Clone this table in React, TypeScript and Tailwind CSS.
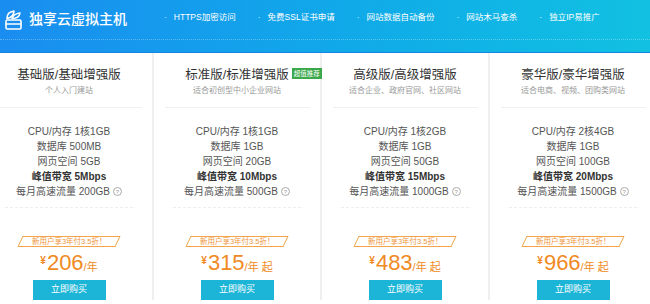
import { Fragment } from "react"

const features = ["HTTPS加密访问", "免费SSL证书申请", "网站数据自动备份", "网站木马查杀", "独立IP易推广"]

const plans = [
    { title: "基础版/基础增强版", sub: "个人入门建站", cpu: "1核1GB", db: "500MB", web: "5GB", bw: "5Mbps", traffic: "200GB", price: "206", from: false, hot: false },
    { title: "标准版/标准增强版", sub: "适合初创型中小企业网站", cpu: "1核1GB", db: "1GB", web: "20GB", bw: "10Mbps", traffic: "500GB", price: "315", from: true, hot: true },
    { title: "高级版/高级增强版", sub: "适合企业、政府官网、社区网站", cpu: "1核2GB", db: "1GB", web: "50GB", bw: "15Mbps", traffic: "1000GB", price: "483", from: true, hot: false },
    { title: "豪华版/豪华增强版", sub: "适合电商、视频、团购类网站", cpu: "2核4GB", db: "1GB", web: "100GB", bw: "20Mbps", traffic: "1500GB", price: "966", from: true, hot: false },
]

const LogoIcon = () => (
    <svg width="19" height="21" viewBox="0 0 19 21" fill="none" stroke="white" strokeWidth="1.6" strokeLinejoin="round" strokeLinecap="round">
        <path d="M3 9.5C3 5 6 2.5 10 2c0 3.5-2.5 6.5-7 7.5z" />
        <path d="M8 9.5c1-3 4-5 8-5.5-.5 3.5-3.5 5.5-8 5.5z" />
        <rect x="2" y="11" width="15" height="9" rx="1.2" />
        <path d="M2 15h15" />
    </svg>
)

const HelpIcon = () => (
    <span className="ml-[3px] inline-flex size-[9px] items-center justify-center rounded-full border border-[#aaa] text-[6px] leading-none text-[#999]">?</span>
)

const PlanCard = ({ plan }: { plan: typeof plans[number] }) => {
    return (
        <div className="flex w-[168px] shrink-0 flex-col items-center border-r-2 border-[#efefef] bg-white pt-[14px]">
            <div className="relative text-[12.5px] leading-[16px] text-[#333]">
                {plan.title}
                {plan.hot && (
                    <span className="absolute left-full top-[1px] ml-[3px] whitespace-nowrap bg-[#3ba84a] px-[2px] text-[6.5px] leading-[11px] text-white">超值推荐</span>
                )}
            </div>
            <div className="mt-[2px] text-[8px] leading-[12px] text-[#999]">{plan.sub}</div>
            <div className="mt-[10px] h-px w-[145px] bg-[#f0f0f0]" />

            <div className="mt-[16px] flex flex-col items-center text-[10px] leading-[15px] text-[#555]">
                <div>CPU/内存 {plan.cpu}</div>
                <div>数据库 {plan.db}</div>
                <div>网页空间 {plan.web}</div>
                <div className="font-bold text-[#333]">峰值带宽 {plan.bw}</div>
                <div className="flex items-center">每月高速流量 {plan.traffic}<HelpIcon /></div>
            </div>
            <div className="mt-[8px] w-[128px] border-t border-dashed border-[#eee]" />

            <div className="mt-[28px] flex h-[11px] w-[98px] -skew-x-[25deg] items-center justify-center border border-[#f2a54a]">
                <span className="skew-x-[25deg] text-[7.5px] leading-none text-[#f0953a]">新用户享3年付3.5折！</span>
            </div>
            <div className="mt-[4px] flex h-[24px] items-end text-[#f08a24]">
                <span className="mb-[9px] mr-[1px] text-[10px] font-bold leading-none">¥</span>
                <span className="text-[22px] leading-[24px]">{plan.price}</span>
                <span className="mb-[2px] text-[11px] leading-none">/年{plan.from && <span className="ml-[3px]">起</span>}</span>
            </div>
            <button className="mt-[5px] h-[20px] w-[73px] bg-[#1cb5d7] text-[9px] text-white">立即购买</button>
        </div>
    )
}

export default function App() {
    return (
        <div className="h-[304px] w-[650px] overflow-hidden bg-white" style={{ fontFamily: '"Liberation Sans", "Noto Sans CJK SC", sans-serif' }}>
            <div className="h-[53px] border-b border-[#1784e0] bg-linear-to-r from-[#1a8df0] to-[#12c1e1]">
                <div className="flex h-[40px] items-center border-b border-dotted border-white/30 pl-[4px] text-white">
                    <LogoIcon />
                    <span className="ml-[6px] text-[14px] font-medium">独享云虚拟主机</span>
                    <div className="ml-[37px] mt-[-4px] flex items-center gap-[22px] text-[8.5px]">
                        {features.map((f) => (
                            <Fragment key={f}>
                                <span className="flex items-center">
                                    <span className="mr-[7px] text-white/80">·</span>
                                    {f}
                                </span>
                            </Fragment>
                        ))}
                    </div>
                </div>
            </div>

            <div className="ml-[-14px] flex">
                {plans.map((p) => (
                    <PlanCard key={p.title} plan={p} />
                ))}
            </div>
        </div>
    )
}
